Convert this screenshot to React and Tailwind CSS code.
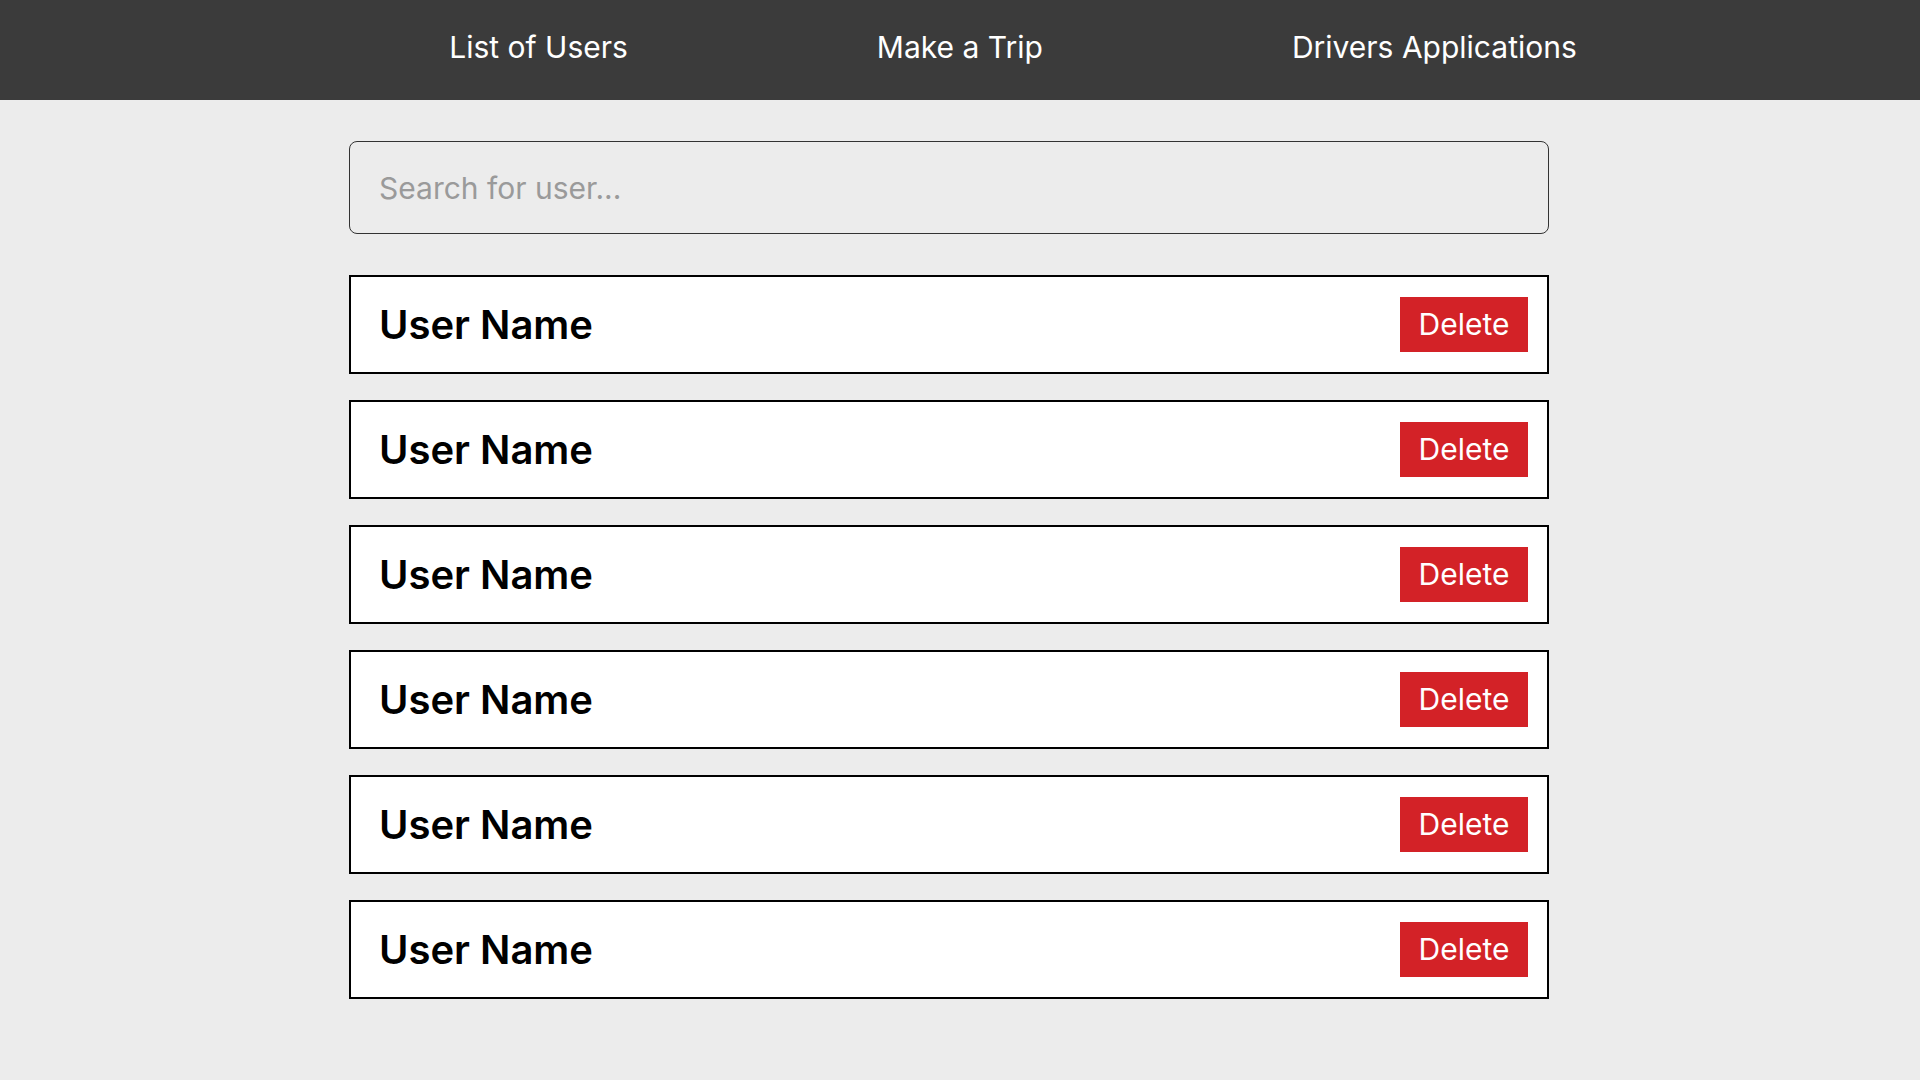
import { useState } from "react";

const users = ["User Name", "User Name", "User Name", "User Name", "User Name", "User Name"];

export default function App() {
  const [query, setQuery] = useState("");

  return (
    <div className="min-h-screen bg-[#ececec] font-['Inter',sans-serif]">
      <nav className="h-[100px] bg-[#3b3b3b] flex items-center justify-center gap-[249px] pl-[106px] pb-[5px]">
        <a href="#" className="text-[30px] text-white">List of Users</a>
        <a href="#" className="text-[30px] text-white">Make a Trip</a>
        <a href="#" className="text-[30px] text-white">Drivers Applications</a>
      </nav>

      <div className="w-[1200px] ml-[349px] pt-[41px] pb-10">
        <input
          type="text"
          value={query}
          onChange={(e) => setQuery(e.target.value)}
          placeholder="Search for user..."
          className="w-full h-[93px] px-[29px] bg-[#ececec] border border-[#333] rounded-lg text-[30px] placeholder:text-[#9a9a9a] focus:outline-none"
        />

        <div className="mt-[41px] flex flex-col gap-[26px]">
          {users.map((name, i) => (
            <div
              key={i}
              className="h-[99px] bg-white border-2 border-black flex items-center justify-between pl-[28px] pr-[19px]"
            >
              <span className="text-[40px] font-semibold text-black">{name}</span>
              <button className="w-[128px] h-[55px] bg-[#d32227] text-white text-[30px]">
                Delete
              </button>
            </div>
          ))}
        </div>
      </div>
    </div>
  );
}
